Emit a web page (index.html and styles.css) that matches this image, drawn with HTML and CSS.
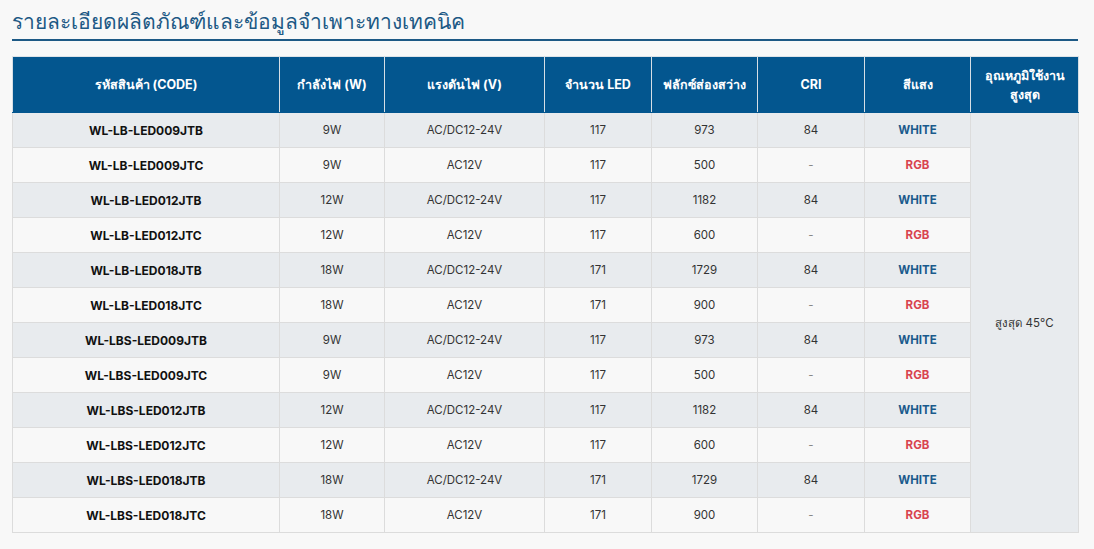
FILE: index.html
```html
<!DOCTYPE html>
<html lang="th">
<head>
<meta charset="utf-8">
<title>รายละเอียดผลิตภัณฑ์</title>
<link rel="stylesheet" href="styles.css">
</head>
<body>
<div class="page">
  <h2 class="title">รายละเอียดผลิตภัณฑ์และข้อมูลจำเพาะทางเทคนิค</h2>
  <table class="spec">
    <colgroup>
      <col class="c-code"><col class="c-w"><col class="c-v"><col class="c-led"><col class="c-flux"><col class="c-cri"><col class="c-color"><col class="c-temp">
    </colgroup>
    <thead>
      <tr>
        <th>รหัสสินค้า (CODE)</th>
        <th>กำลังไฟ (W)</th>
        <th>แรงดันไฟ (V)</th>
        <th>จำนวน LED</th>
        <th>ฟลักซ์ส่องสว่าง</th>
        <th>CRI</th>
        <th>สีแสง</th>
        <th>อุณหภูมิใช้งาน<br>สูงสุด</th>
      </tr>
    </thead>
    <tbody>
      <tr><td class="code">WL-LB-LED009JTB</td><td>9W</td><td>AC/DC12-24V</td><td>117</td><td>973</td><td>84</td><td class="white">WHITE</td><td class="temp" rowspan="12">สูงสุด 45°C</td></tr>
      <tr><td class="code">WL-LB-LED009JTC</td><td>9W</td><td>AC12V</td><td>117</td><td>500</td><td class="dash">-</td><td class="rgb">RGB</td></tr>
      <tr><td class="code">WL-LB-LED012JTB</td><td>12W</td><td>AC/DC12-24V</td><td>117</td><td>1182</td><td>84</td><td class="white">WHITE</td></tr>
      <tr><td class="code">WL-LB-LED012JTC</td><td>12W</td><td>AC12V</td><td>117</td><td>600</td><td class="dash">-</td><td class="rgb">RGB</td></tr>
      <tr><td class="code">WL-LB-LED018JTB</td><td>18W</td><td>AC/DC12-24V</td><td>171</td><td>1729</td><td>84</td><td class="white">WHITE</td></tr>
      <tr><td class="code">WL-LB-LED018JTC</td><td>18W</td><td>AC12V</td><td>171</td><td>900</td><td class="dash">-</td><td class="rgb">RGB</td></tr>
      <tr><td class="code">WL-LBS-LED009JTB</td><td>9W</td><td>AC/DC12-24V</td><td>117</td><td>973</td><td>84</td><td class="white">WHITE</td></tr>
      <tr><td class="code">WL-LBS-LED009JTC</td><td>9W</td><td>AC12V</td><td>117</td><td>500</td><td class="dash">-</td><td class="rgb">RGB</td></tr>
      <tr><td class="code">WL-LBS-LED012JTB</td><td>12W</td><td>AC/DC12-24V</td><td>117</td><td>1182</td><td>84</td><td class="white">WHITE</td></tr>
      <tr><td class="code">WL-LBS-LED012JTC</td><td>12W</td><td>AC12V</td><td>117</td><td>600</td><td class="dash">-</td><td class="rgb">RGB</td></tr>
      <tr><td class="code">WL-LBS-LED018JTB</td><td>18W</td><td>AC/DC12-24V</td><td>171</td><td>1729</td><td>84</td><td class="white">WHITE</td></tr>
      <tr><td class="code">WL-LBS-LED018JTC</td><td>18W</td><td>AC12V</td><td>171</td><td>900</td><td class="dash">-</td><td class="rgb">RGB</td></tr>
    </tbody>
  </table>
</div>
</body>
</html>
```

FILE: styles.css
```css
html, body {
  margin: 0;
  padding: 0;
  background: #f8f8f8;
}
body {
  font-family: Inter, "Noto Sans", "DejaVu Sans", sans-serif;
  color: #333;
}
.page {
  padding: 0 16px 0 12px;
}
.title {
  margin: 0;
  padding: 6px 0 2px;
  font-family: "Noto Sans", "DejaVu Sans", sans-serif;
  font-size: 21px;
  font-weight: 400;
  line-height: 31px;
  color: #1d5985;
  border-bottom: 2px solid #1d5985;
}
.spec {
  margin-top: 15px;
  width: 1066px;
  border-collapse: collapse;
  table-layout: fixed;
  font-size: 12px;
}
.c-code { width: 267px; }
.c-w { width: 105px; }
.c-v { width: 160px; }
.c-led { width: 107px; }
.c-flux { width: 106px; }
.c-cri { width: 107px; }
.c-color { width: 106px; }
.c-temp { width: 108px; }
.spec th {
  background: #03568f;
  color: #fff;
  font-weight: 700;
  font-size: 12.5px;
  height: 55px;
  padding: 0 4px;
  line-height: 19px;
  border: 1px solid #d6dee5;
  border-top-color: #dde3e8;
  border-bottom-color: #03568f;
  text-align: center;
  vertical-align: middle;
}
.spec td {
  height: 34px;
  padding: 0 4px;
  border: 1px solid #dcdcdc;
  text-align: center;
  vertical-align: middle;
  font-size: 11.5px;
}
.spec tbody tr:first-child td { border-top-color: #03568f; }
.spec tbody tr:nth-child(odd) td { background: #e8ebee; }
.spec tbody tr:nth-child(even) td { background: #f8f8f8; }
.spec td.code {
  font-weight: 700;
  font-size: 12px;
  color: #111;
}
.spec td.white {
  font-weight: 700;
  color: #1a5a8c;
}
.spec td.rgb {
  font-weight: 700;
  color: #d8434f;
}
.spec td.dash { color: #888; }
.spec tbody td.temp {
  background: #e8ebee;
  color: #333;
}
```
